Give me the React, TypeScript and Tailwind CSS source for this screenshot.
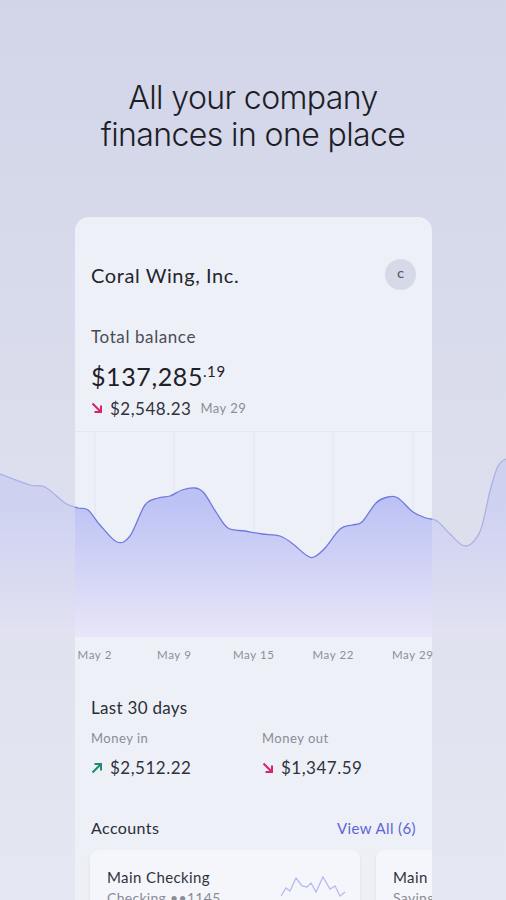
import React from "react";

type P = [number, number];

const wave: P[] = [
  [-10, 473], [0, 475], [30, 486], [45, 488], [65, 504], [78, 509], [88, 511],
  [100, 526], [117, 543], [130, 537], [145, 506], [158, 499], [170, 497],
  [182, 491], [195, 489], [204, 494], [216, 513], [228, 529], [245, 532],
  [262, 535], [280, 537], [293, 545], [306, 556], [314, 558], [326, 548],
  [340, 530], [352, 526], [362, 523], [376, 504], [388, 498], [398, 499],
  [413, 513], [426, 519], [437, 522], [450, 535], [462, 546], [471, 545],
  [481, 530], [490, 492], [498, 467], [506, 460], [516, 456],
];

function smooth(pts: P[], oy: number): string {
  const p = pts.map(([x, y]) => [x, y - oy] as P);
  let d = `M${p[0][0]},${p[0][1]}`;
  for (let i = 0; i < p.length - 1; i++) {
    const p0 = p[i - 1] || p[i];
    const p1 = p[i];
    const p2 = p[i + 1];
    const p3 = p[i + 2] || p2;
    const t = 6;
    const c1x = p1[0] + (p2[0] - p0[0]) / t;
    const c1y = p1[1] + (p2[1] - p0[1]) / t;
    const c2x = p2[0] - (p3[0] - p1[0]) / t;
    const c2y = p2[1] - (p3[1] - p1[1]) / t;
    d += ` C${c1x.toFixed(1)},${c1y.toFixed(1)} ${c2x.toFixed(1)},${c2y.toFixed(1)} ${p2[0]},${p2[1]}`;
  }
  return d;
}

function Chart() {
  const oy = 432;
  const h = 206;
  const line = smooth(wave, oy);
  const area = `${line} L516,${h} L-10,${h} Z`;
  const grid = [95, 174, 254, 333, 413];
  return (
    <svg width="506" height={h} viewBox={`0 0 506 ${h}`} className="block">
      <defs>
        <linearGradient id="fillg" x1="0" y1="0" x2="0" y2="1">
          <stop offset="0.25" stopColor="#bcc2f4" />
          <stop offset="1" stopColor="#e8e6f8" />
        </linearGradient>
      </defs>
      <rect x="75" y="0" width="357" height={h} fill="#eef0f8" />
      {grid.map((x) => (
        <line key={x} x1={x} y1="1" x2={x} y2={h} stroke="#e2e4ef" strokeWidth="1" />
      ))}
      <line x1="75" y1="0.5" x2="432" y2="0.5" stroke="#e4e6f0" strokeWidth="1" />
      <path d={area} fill="url(#fillg)" />
      <path d={line} fill="none" stroke="#7079de" strokeWidth="1.3" />
      <rect x="0" y="0" width="75" height={h} fill="#dcdfec" opacity="0.55" />
      <rect x="432" y="0" width="74" height={h} fill="#dcdfec" opacity="0.55" />
    </svg>
  );
}

function ArrowDown({ color }: { color: string }) {
  return (
    <svg width="12" height="12" viewBox="0 0 12 12" className="shrink-0">
      <path d="M1.5 1.5 L10 10 M10 3.5 V10 H3.5" fill="none" stroke={color} strokeWidth="2" />
    </svg>
  );
}

function ArrowUp({ color }: { color: string }) {
  return (
    <svg width="12" height="12" viewBox="0 0 12 12" className="shrink-0">
      <path d="M1.5 10.5 L10 2 M3.5 2 H10 V8.5" fill="none" stroke={color} strokeWidth="2" />
    </svg>
  );
}

function Spark() {
  return (
    <svg width="66" height="24" viewBox="0 0 66 24">
      <path
        d="M1 22 L6 14 L10 17 L16 4 L22 12 L27 13 L31 9 L36 18 L43 3 L50 15 L55 12 L60 22 L65 18"
        fill="none"
        stroke="#b7bcf0"
        strokeWidth="1.3"
      />
    </svg>
  );
}

export default function App() {
  return (
    <div
      className="h-[900px] w-[506px] overflow-hidden bg-gradient-to-b from-[#d2d5e8] to-[#e5e7f2]"
      style={{ fontFamily: "Lato, 'Noto Sans', sans-serif" }}
    >
      <h1
        className="pt-[79px] text-center text-[32px] font-light leading-[37px] tracking-[-0.6px] text-[#1d1e26]"
        style={{ fontFamily: "Inter, 'Liberation Sans', sans-serif" }}
      >
        All your company
        <br />
        finances in one place
      </h1>

      <div className="ml-[75px] mt-[64px] w-[357px] rounded-t-[14px] bg-[#eef0f8] pb-10">
        <div className="flex items-center justify-between pl-4 pr-[16px] pt-[42px]">
          <span className="text-[20px] tracking-[0.6px] text-[#24252d]">Coral Wing, Inc.</span>
          <div className="flex h-[31px] w-[31px] items-center justify-center rounded-full bg-[#d6d9e7] text-[10px] font-bold text-[#555a66]">
            C
          </div>
        </div>

        <div className="mt-[34px] px-4 text-[17px] tracking-[0.6px] text-[#4a4c55]">Total balance</div>
        <div className="mt-[12px] flex items-start px-4 text-[#1f2029]">
          <span className="text-[25px] leading-[28px] tracking-[0.6px]">$137,285</span>
          <span className="mt-[1px] text-[15px] leading-[16px] tracking-[0.6px]">.19</span>
        </div>
        <div className="mt-[6px] flex items-center px-4">
          <ArrowDown color="#d4246d" />
          <span className="ml-[7px] text-[17px] tracking-[0.5px] text-[#30323b]">$2,548.23</span>
          <span className="ml-[9px] text-[13px] tracking-[0.5px] text-[#8a8c96]">May 29</span>
        </div>

        <div className="-ml-[75px] mt-[10px] w-[506px]">
          <Chart />
          <div className="flex pl-[55px] pt-[9px]">
            {["May 2", "May 9", "May 15", "May 22", "May 29"].map((d) => (
              <div key={d} className="w-[79.5px] text-center text-[11.5px] tracking-[0.6px] text-[#8c8e98]">
                {d}
              </div>
            ))}
          </div>
        </div>

        <div className="mt-[32px] px-4 text-[17px] tracking-[0.3px] text-[#2b2d36]">Last 30 days</div>
        <div className="mt-[8px] flex px-4">
          <div className="w-[171px]">
            <div className="text-[13px] tracking-[0.5px] text-[#8a8c96]">Money in</div>
            <div className="mt-[7px] flex items-center">
              <ArrowUp color="#1d8c6c" />
              <span className="ml-[7px] text-[17px] tracking-[0.5px] text-[#30323b]">$2,512.22</span>
            </div>
          </div>
          <div>
            <div className="text-[13px] tracking-[0.5px] text-[#8a8c96]">Money out</div>
            <div className="mt-[7px] flex items-center">
              <ArrowDown color="#d4246d" />
              <span className="ml-[7px] text-[17px] tracking-[0.5px] text-[#30323b]">$1,347.59</span>
            </div>
          </div>
        </div>

        <div className="mt-[35px] flex items-center justify-between px-4">
          <span className="text-[16px] tracking-[0.4px] text-[#2b2d36]">Accounts</span>
          <span className="text-[15px] tracking-[0.4px] text-[#5b66d6]">View All (6)</span>
        </div>

        <div className="mt-[10px] flex gap-4 overflow-hidden pl-[15px]">
          <div className="flex h-[80px] w-[270px] shrink-0 justify-between rounded-[8px] bg-[#f5f6fb] pl-[17px] pr-[14px] pt-[18px] shadow-[0_1px_3px_rgba(80,90,140,0.12)]">
            <div>
              <div className="text-[15px] leading-[19px] tracking-[0.4px] text-[#30323b]">Main Checking</div>
              <div className="mt-[2px] text-[14px] leading-[18px] tracking-[0.3px] text-[#8a8c96]">Checking ••1145</div>
            </div>
            <div className="pt-[6px]">
              <Spark />
            </div>
          </div>
          <div className="h-[80px] w-[270px] shrink-0 rounded-[8px] bg-[#f5f6fb] pl-[17px] pt-[18px] shadow-[0_1px_3px_rgba(80,90,140,0.12)]">
            <div className="text-[15px] leading-[19px] tracking-[0.4px] text-[#30323b]">Main Savings</div>
            <div className="mt-[2px] text-[14px] leading-[18px] tracking-[0.3px] text-[#8a8c96]">Savings ••2210</div>
          </div>
        </div>
      </div>
    </div>
  );
}
